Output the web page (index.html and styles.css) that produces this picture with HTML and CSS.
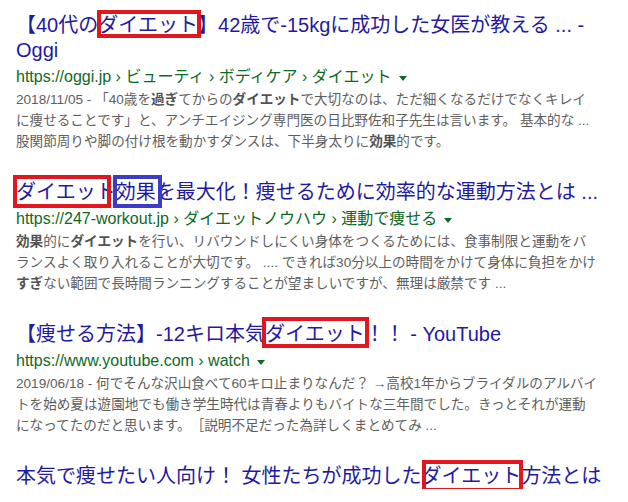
FILE: index.html
```html
<!DOCTYPE html>
<html lang="ja">
<head>
<meta charset="utf-8">
<title>ダイエット 検索結果</title>
<link rel="stylesheet" href="styles.css">
</head>
<body>
<div class="results">
  <div class="result">
    <h3 class="title">【40代の<span class="mark mark-1">ダイエット</span>】42歳で-15kgに成功した女医が教える ... -<br>Oggi</h3>
    <div class="url">https://oggi.jp › ビューティ › ボディケア › ダイエット<span class="caret"></span></div>
    <div class="snippet">2018/11/05 - 「40歳を<b>過ぎ</b>てからの<b>ダイエット</b>で大切なのは、ただ細くなるだけでなくキレイ<br>に痩せることです」と、アンチエイジング専門医の日比野佐和子先生は言います。 基本的な ...<br>股関節周りや脚の付け根を動かすダンスは、下半身太りに<b>効果</b>的です。</div>
  </div>
  <div class="result">
    <h3 class="title"><span class="mark mark-2">ダイエット</span><span class="mark mark-blue">効果</span>を最大化！痩せるために効率的な運動方法とは ...</h3>
    <div class="url">https://247-workout.jp › ダイエットノウハウ › 運動で痩せる<span class="caret"></span></div>
    <div class="snippet"><b>効果</b>的に<b>ダイエット</b>を行い、リバウンドしにくい身体をつくるためには、食事制限と運動をバ<br>ランスよく取り入れることが大切です。 .... できれば30分以上の時間をかけて身体に負担をかけ<br><b>すぎ</b>ない範囲で長時間ランニングすることが望ましいですが、無理は厳禁です ...</div>
  </div>
  <div class="result">
    <h3 class="title">【痩せる方法】-12キロ本気<span class="mark mark-3">ダイエット</span>！！ - YouTube</h3>
    <div class="url">https://www.youtube.com › watch<span class="caret"></span></div>
    <div class="snippet">2019/06/18 - 何でそんな沢山食べて60キロ止まりなんだ？ →高校1年からブライダルのアルバイ<br>トを始め夏は遊園地でも働き学生時代は青春よりもバイトな三年間でした。きっとそれが運動<br>になってたのだと思います。　［説明不足だった為詳しくまとめてみ ...</div>
  </div>
  <div class="result">
    <h3 class="title">本気で痩せたい人向け！ 女性たちが成功した<span class="mark mark-4">ダイエット</span>方法とは</h3>
  </div>
</div>
</body>
</html>
```

FILE: styles.css
```css
html, body {
  margin: 0;
  padding: 0;
  background: #ffffff;
}

body {
  font-family: "Liberation Sans", "Noto Sans CJK JP", sans-serif;
  overflow: hidden;
}

.results {
  display: flex;
  flex-direction: column;
  gap: 28px;
  padding: 13px 0 0 16px;
}

.result {
  display: flex;
  flex-direction: column;
}

.title {
  margin: 0;
  font-size: 20px;
  line-height: 25px;
  font-weight: normal;
  color: #1f1a9f;
  white-space: nowrap;
}

.url {
  margin-top: 2px;
  font-size: 16px;
  line-height: 24px;
  color: #0d6a26;
  white-space: nowrap;
  display: flex;
  align-items: center;
}

.caret {
  display: inline-block;
  width: 0;
  height: 0;
  margin-left: 7px;
  margin-top: 2px;
  border-left: 4px solid transparent;
  border-right: 4px solid transparent;
  border-top: 5px solid #0d6a26;
}

.snippet {
  font-size: 13.6px;
  line-height: 21px;
  color: #5e5e5e;
  white-space: nowrap;
}

.snippet b {
  font-weight: bold;
  color: #525252;
}

.mark {
  position: relative;
}

.mark::after {
  content: "";
  position: absolute;
  border: 4px solid #e2161f;
}

.mark-1::after { left: -1px; right: -3px; top: -4px; bottom: -2px; }
.mark-2::after { left: -3px; right: 5px; top: -6px; bottom: -5px; }
.mark-blue::after { left: -3px; right: -6px; top: -6px; bottom: -5px; border-color: #3c3cc8; }
.mark-3::after { left: -3px; right: -4px; top: -6px; bottom: -3px; }
.mark-4::after { left: 0; right: -2px; top: -5px; bottom: -5px; }
```
